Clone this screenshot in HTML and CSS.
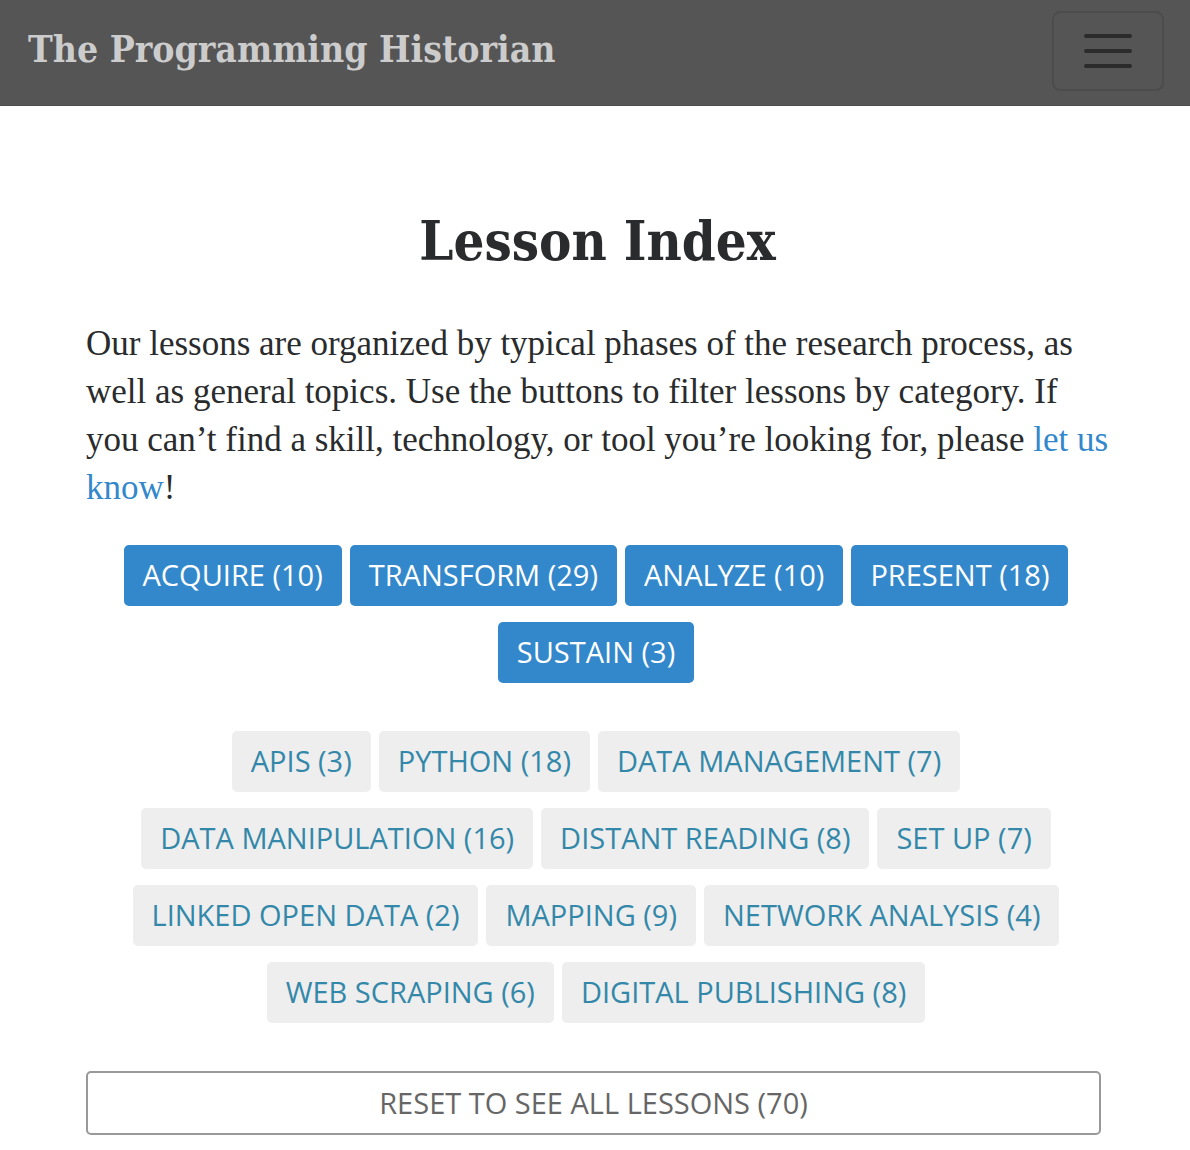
FILE: index.html
```html
<!DOCTYPE html>
<html lang="en">
<head>
  <meta charset="utf-8">
  <meta name="viewport" content="width=device-width, initial-scale=1">
  <title>Lesson Index | The Programming Historian</title>
  <link rel="stylesheet" href="styles.css">
</head>
<body>
  <header class="navbar">
    <a class="brand" href="#">The Programming Historian</a>
    <button class="toggler" type="button" aria-label="Toggle navigation">
      <svg class="toggler-icon" viewBox="0 0 60 60" aria-hidden="true">
        <path d="M8 15h44M8 30h44M8 45h44" stroke="#2b2b2b" stroke-width="4" stroke-linecap="round"/>
      </svg>
    </button>
  </header>
  <main class="content">
    <h1 class="title">Lesson Index</h1>
    <p class="intro">Our lessons are organized by typical phases of the research process, as well as general topics. Use the buttons to filter lessons by category. If you can’t find a skill, technology, or tool you’re looking for, please <a class="link" href="#">let us know</a>!</p>
    <div class="filters">
      <button class="filter activity" type="button">ACQUIRE (10)</button>
      <button class="filter activity" type="button">TRANSFORM (29)</button>
      <button class="filter activity" type="button">ANALYZE (10)</button>
      <button class="filter activity" type="button">PRESENT (18)</button>
      <button class="filter activity" type="button">SUSTAIN (3)</button>
    </div>
    <div class="filters">
      <button class="filter topic" type="button">APIS (3)</button>
      <button class="filter topic" type="button">PYTHON (18)</button>
      <button class="filter topic" type="button">DATA MANAGEMENT (7)</button>
      <button class="filter topic" type="button">DATA MANIPULATION (16)</button>
      <button class="filter topic" type="button">DISTANT READING (8)</button>
      <button class="filter topic" type="button">SET UP (7)</button>
      <button class="filter topic" type="button">LINKED OPEN DATA (2)</button>
      <button class="filter topic" type="button">MAPPING (9)</button>
      <button class="filter topic" type="button">NETWORK ANALYSIS (4)</button>
      <button class="filter topic" type="button">WEB SCRAPING (6)</button>
      <button class="filter topic" type="button">DIGITAL PUBLISHING (8)</button>
    </div>
    <button class="reset" type="button">RESET TO SEE ALL LESSONS (70)</button>
  </main>
</body>
</html>
```

FILE: styles.css
```css
* {
  box-sizing: border-box;
}

body {
  margin: 0;
  background: #fff;
  color: #292b2c;
}

.navbar {
  display: flex;
  justify-content: space-between;
  align-items: flex-start;
  padding: 11px 26px 14px 28px;
  background: #555;
  border-bottom: 1px solid #4d4d4d;
}

.brand {
  font: bold 37px/76px "DejaVu Serif Condensed", "DejaVu Serif", serif;
  color: #ccc;
  text-decoration: none;
}

.toggler {
  display: flex;
  align-items: center;
  justify-content: center;
  width: 112px;
  height: 80px;
  padding: 0;
  background: transparent;
  border: 2px solid #4c4c4c;
  border-radius: 8px;
}

.toggler-icon {
  width: 60px;
  height: 60px;
}

.content {
  padding: 96px 81px 16px 86px;
}

.title {
  margin: 0 0 40px;
  font: bold 54px/78px "DejaVu Serif Condensed", "DejaVu Serif", serif;
  text-align: center;
}

.intro {
  margin: 0 0 33px;
  font: 35px/48px "Liberation Serif", serif;
}

.link {
  color: #38c;
  text-decoration: none;
}

.filters {
  display: flex;
  flex-wrap: wrap;
  justify-content: center;
  gap: 16px 8px;
  padding: 0 35px 0 32px;
  margin-bottom: 48px;
}

.filter,
.reset {
  font: 29px/60px "Open Sans", sans-serif;
  border-radius: 5px;
}

.filter {
  padding: 0 19px 1px;
  border: 0;
}

.activity {
  background: #38c;
  color: #fff;
}

.topic {
  background: #eee;
  color: #38a;
}

.reset {
  width: calc(100% - 8px);
  padding: 0;
  background: #fff;
  border: 2px solid #999;
  color: #666;
}
```
